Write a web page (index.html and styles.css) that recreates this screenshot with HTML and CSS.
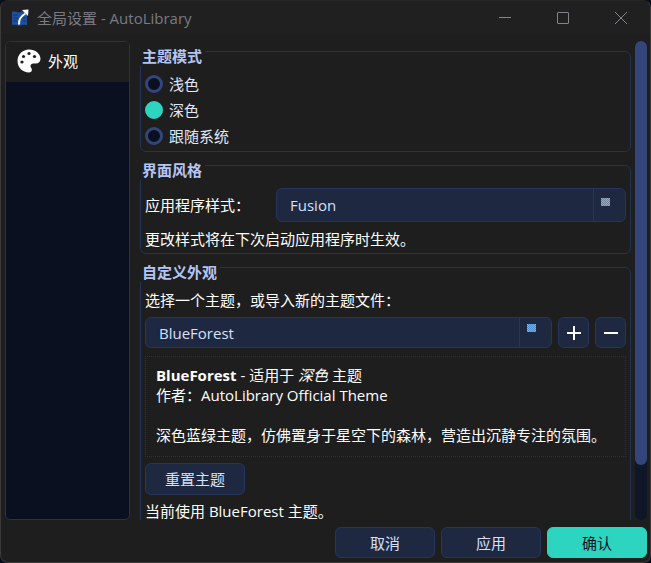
FILE: index.html
```html
<!DOCTYPE html>
<html lang="zh-CN">
<head>
    <meta charset="UTF-8">
    <meta name="viewport" content="width=device-width, initial-scale=1.0">
    <title>全局设置 - AutoLibrary</title>
    <link rel="stylesheet" href="styles.css">
</head>
<body>
    <div class="window">
        <header class="titlebar">
            <svg class="app-icon" viewBox="0 0 18 18" aria-hidden="true">
                <path fill="#1f4f9e" d="M1 2.500q4-.5 7 1q2-1 5-1l3 3v10.500q-5-1-8 1q-3-2-7-1z"/>
                <path stroke="#17386f" stroke-width="1" d="M2 6h5M2 9h5M2 12h4M12 9h3M12 12h3"/>
                <path fill="none" stroke="#fff" stroke-width="2" d="M8 15.500q-.5-7 6.500-11"/>
                <path fill="#fff" d="M11 1l6.500-.5-.5 6.500z"/>
            </svg>
            <h1>全局设置 - AutoLibrary</h1>
            <div class="window-controls">
                <button type="button" aria-label="最小化"><svg viewBox="0 0 12 12"><path d="M0 5.500h12"/></svg></button>
                <button type="button" aria-label="最大化"><svg viewBox="0 0 12 12"><rect x="0.5" y="0.5" width="11" height="11" rx="0.5"/></svg></button>
                <button type="button" aria-label="关闭"><svg viewBox="0 0 12 12"><path d="M0 0l12 12M12 0l-12 12"/></svg></button>
            </div>
        </header>

        <main class="content">
            <nav class="sidebar">
                <a href="#appearance" class="nav-item">
                    <svg viewBox="0 0 24 24" aria-hidden="true">
                        <path fill="#fff" d="M12 .5C5.600.5.5 5.600.5 12S5.600 23.500 12 23.500c1.700 0 2.900-1.200 2.900-2.800 0-.8-.3-1.400-.8-2-.4-.5-.6-1-.6-1.600 0-1.500 1.200-2.600 2.700-2.600h2.600c2.700 0 4.700-2 4.700-4.500C23.500 4.700 18.300.5 12 .5z"/>
                        <g fill="#1e1e1e">
                            <circle cx="5" cy="13" r="1.600"/>
                            <circle cx="6.500" cy="7.500" r="1.600"/>
                            <circle cx="12" cy="4.500" r="1.600"/>
                            <circle cx="17.500" cy="7.500" r="1.600"/>
                        </g>
                    </svg>
                    外观
                </a>
            </nav>

            <form class="panel" id="appearance">
                <fieldset class="group">
                    <legend>主题模式</legend>
                    <div class="radio-list">
                        <label><input type="radio" name="mode" value="light">浅色</label>
                        <label><input type="radio" name="mode" value="dark" checked>深色</label>
                        <label><input type="radio" name="mode" value="system">跟随系统</label>
                    </div>
                </fieldset>

                <fieldset class="group">
                    <legend>界面风格</legend>
                    <div class="style-row">
                        <label for="appStyle">应用程序样式：</label>
                        <div class="combo combo-tall">
                            <select id="appStyle">
                                <option>Fusion</option>
                            </select>
                            <span class="combo-arrow"><i class="grey"></i></span>
                        </div>
                    </div>
                    <p>更改样式将在下次启动应用程序时生效。</p>
                </fieldset>

                <fieldset class="group">
                    <legend>自定义外观</legend>
                    <label class="theme-label" for="theme">选择一个主题，或导入新的主题文件：</label>
                    <div class="theme-row">
                        <div class="combo">
                            <select id="theme">
                                <option>BlueForest</option>
                            </select>
                            <span class="combo-arrow"><i></i></span>
                        </div>
                        <button type="button" class="btn btn-icon" aria-label="导入主题"><svg viewBox="0 0 16 16"><path d="M8 1v14M1 8h14"/></svg></button>
                        <button type="button" class="btn btn-icon" aria-label="删除主题"><svg viewBox="0 0 16 16"><path d="M1 8h14"/></svg></button>
                    </div>
                    <div class="theme-info">
                        <p><b>BlueForest</b> - 适用于 <em>深色</em> 主题</p>
                        <p>作者：AutoLibrary Official Theme</p>
                        <p class="description">深色蓝绿主题，仿佛置身于星空下的森林，营造出沉静专注的氛围。</p>
                    </div>
                    <button type="button" class="btn">重置主题</button>
                    <p class="current">当前使用 BlueForest 主题。</p>
                </fieldset>
            </form>

            <div class="scrollbar"><div class="thumb"></div></div>
        </main>

        <footer class="actions">
            <button type="button" class="btn">取消</button>
            <button type="button" class="btn">应用</button>
            <button type="submit" form="appearance" class="btn btn-primary">确认</button>
        </footer>
    </div>
</body>
</html>
```
FILE: styles.css
```css
* {
    box-sizing: border-box;
}
body {
    margin: 0;
    background: #080d1c;
    color: #fff;
    font-family: "Open Sans", "Noto Sans CJK SC", sans-serif;
    font-size: 15px;
    line-height: 20px;
}
button, select, input {
    font: inherit;
    color: inherit;
    margin: 0;
}
p {
    margin: 0;
}
.window {
    display: flex;
    flex-direction: column;
    height: 100vh;
    background: #1e1e1e;
    border: 1px solid #3a3a3a;
    border-top-color: #262626;
    border-radius: 8px;
    overflow: hidden;
}

/* title bar */
.titlebar {
    display: flex;
    align-items: center;
    flex: none;
    height: 33px;
    padding-left: 10px;
    background: #202020;
}
.titlebar h1 {
    flex: 1;
    margin: 0 0 0 8px;
    font-size: 15px;
    font-weight: normal;
    color: #7b7982;
}
.app-icon {
    width: 18px;
    height: 18px;
}
.window-controls {
    display: flex;
}
.window-controls button {
    width: 58px;
    height: 33px;
    padding: 0;
    border: none;
    background: none;
}
.window-controls svg {
    display: block;
    width: 12px;
    height: 12px;
    margin: auto;
    fill: none;
    stroke: #85838b;
}

/* main area */
.content {
    display: flex;
    flex: 1;
    min-height: 0;
    padding: 6px 3px 0 4px;
}
.sidebar {
    flex: 0 0 125px;
    margin-top: 1px;
    border: 1px solid #22335a;
    border-radius: 5px;
    background: #0a101f;
    overflow: hidden;
}
.nav-item {
    display: flex;
    align-items: center;
    gap: 7px;
    height: 40px;
    padding: 0 0 2px 11px;
    background: #1e1e1e;
    color: #fff;
    text-decoration: none;
}
.nav-item svg {
    width: 24px;
    height: 24px;
}
.panel {
    flex: 1;
    min-width: 0;
    margin-left: 10px;
    padding-top: 11px;
    overflow: hidden;
}
.scrollbar {
    flex: 0 0 12px;
    margin: 1px 0 0 4px;
    border-radius: 6px;
    background: #0e1628;
}
.thumb {
    height: 88.5%;
    border-radius: 6px;
    background: #33457a;
}

/* group boxes */
.group {
    min-width: 0;
    margin: 0 0 13px;
    padding: 0 4px 4px;
    border: 1px solid #22335a;
    border-radius: 6px;
}
.group legend {
    float: left;
    margin: -6px 0 0 -6px;
    padding: 0 3px;
    background: #1e1e1e;
    color: #b4c5f5;
    font-weight: bold;
}
.group legend + * {
    clear: both;
}
.radio-list {
    display: flex;
    flex-direction: column;
    gap: 6px;
    padding: 8px 0 1px;
}
.radio-list label {
    display: flex;
    align-items: center;
    gap: 6px;
    color: #e0e6f8;
}
.radio-list input {
    appearance: none;
    width: 18px;
    height: 18px;
    border: 3px solid #33457a;
    border-radius: 50%;
    background: #0a101f;
}
.radio-list input:checked {
    border-color: #2dd4bf;
    background: #2dd4bf;
}
.style-row {
    display: flex;
    align-items: center;
    padding: 8px 0 7px;
}
.style-row label {
    flex: 0 0 131px;
}

/* drop-downs and buttons */
.combo {
    display: flex;
    flex: 1;
    height: 31px;
    border: 1px solid #26355e;
    border-radius: 6px;
    background: #1e2840;
    color: #d5e0fa;
}
.combo-tall {
    height: 34px;
}
.combo select {
    appearance: none;
    flex: 1;
    min-width: 0;
    padding: 0 13px;
    border: none;
    background: none;
}
.combo-arrow {
    flex: 0 0 32px;
    padding: 6px 7px;
    border-left: 1px solid #26355e;
}
.combo-tall .combo-arrow {
    padding-top: 9px;
}
.combo-arrow i {
    display: block;
    width: 9px;
    height: 8px;
    background: repeating-conic-gradient(#4b8fd0 0 25%, #9aa6b8 0 50%) 0 0 / 2px 2px;
}
.combo-arrow .grey {
    background: repeating-conic-gradient(#74849c 0 25%, #a3a3ab 0 50%) 0 0 / 2px 2px;
}
.btn {
    width: 100px;
    height: 32px;
    padding: 0;
    border: 1px solid #26355e;
    border-radius: 6px;
    background: #1e2840;
    color: #d5e0fa;
}
.btn-icon {
    width: 31px;
    height: 31px;
}
.btn-icon svg {
    display: block;
    width: 16px;
    height: 16px;
    margin: auto;
    fill: none;
    stroke: #fff;
    stroke-width: 2;
}
.btn-primary {
    border-color: #2dd4bf;
    background: #2dd4bf;
    color: #0a101f;
}

/* theme */
.theme-label {
    display: block;
    padding: 8px 0 7px;
}
.theme-row {
    display: flex;
    gap: 6px;
}
.theme-info {
    margin: 8px 0 6px;
    padding: 8px 10px 11px;
    border: 1px dotted #303036;
}
.description {
    margin-top: 20px;
}
.current {
    padding-top: 6px;
}

.actions {
    display: flex;
    justify-content: flex-end;
    gap: 6px;
    padding: 7px 3px 4px;
}
.actions .btn {
    height: 31px;
}
```
